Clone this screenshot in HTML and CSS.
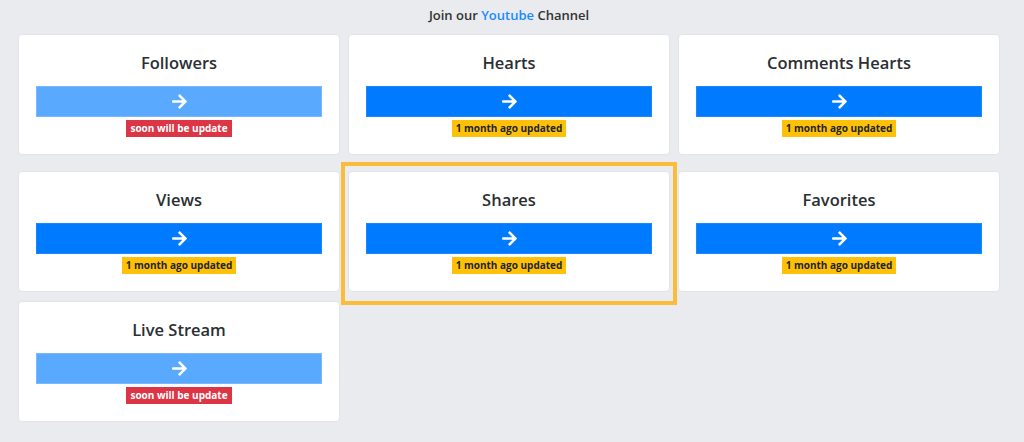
FILE: index.html
```html
<!DOCTYPE html>
<html>
<head>
<meta charset="utf-8">
<link rel="stylesheet" href="styles.css">
</head>
<body>
<div class="page">
  <p class="intro">Join our <a class="yt" href="#">Youtube</a> Channel</p>
  <div class="grid">
    <div class="card first">
      <h3 class="title">Followers</h3>
      <a class="btn off" href="#"><svg class="arrow" viewBox="0 0 448 512"><path d="M190.5 66.9l22.2-22.2c9.4-9.4 24.6-9.4 33.9 0L441 239c9.4 9.4 9.4 24.6 0 33.9L246.6 467.3c-9.4 9.4-24.6 9.4-33.9 0l-22.2-22.2c-9.5-9.5-9.3-25 .4-34.3L311.4 296H24c-13.3 0-24-10.7-24-24v-32c0-13.3 10.7-24 24-24h287.4L190.9 101.2c-9.8-9.3-10-24.8-.4-34.3z"/></svg></a>
      <span class="badge red">soon will be update</span>
    </div>
    <div class="card first">
      <h3 class="title">Hearts</h3>
      <a class="btn" href="#"><svg class="arrow" viewBox="0 0 448 512"><path d="M190.5 66.9l22.2-22.2c9.4-9.4 24.6-9.4 33.9 0L441 239c9.4 9.4 9.4 24.6 0 33.9L246.6 467.3c-9.4 9.4-24.6 9.4-33.9 0l-22.2-22.2c-9.5-9.5-9.3-25 .4-34.3L311.4 296H24c-13.3 0-24-10.7-24-24v-32c0-13.3 10.7-24 24-24h287.4L190.9 101.2c-9.8-9.3-10-24.8-.4-34.3z"/></svg></a>
      <span class="badge yellow">1 month ago updated</span>
    </div>
    <div class="card first">
      <h3 class="title">Comments Hearts</h3>
      <a class="btn" href="#"><svg class="arrow" viewBox="0 0 448 512"><path d="M190.5 66.9l22.2-22.2c9.4-9.4 24.6-9.4 33.9 0L441 239c9.4 9.4 9.4 24.6 0 33.9L246.6 467.3c-9.4 9.4-24.6 9.4-33.9 0l-22.2-22.2c-9.5-9.5-9.3-25 .4-34.3L311.4 296H24c-13.3 0-24-10.7-24-24v-32c0-13.3 10.7-24 24-24h287.4L190.9 101.2c-9.8-9.3-10-24.8-.4-34.3z"/></svg></a>
      <span class="badge yellow">1 month ago updated</span>
    </div>
    <div class="card">
      <h3 class="title">Views</h3>
      <a class="btn" href="#"><svg class="arrow" viewBox="0 0 448 512"><path d="M190.5 66.9l22.2-22.2c9.4-9.4 24.6-9.4 33.9 0L441 239c9.4 9.4 9.4 24.6 0 33.9L246.6 467.3c-9.4 9.4-24.6 9.4-33.9 0l-22.2-22.2c-9.5-9.5-9.3-25 .4-34.3L311.4 296H24c-13.3 0-24-10.7-24-24v-32c0-13.3 10.7-24 24-24h287.4L190.9 101.2c-9.8-9.3-10-24.8-.4-34.3z"/></svg></a>
      <span class="badge yellow">1 month ago updated</span>
    </div>
    <div class="card marked">
      <h3 class="title">Shares</h3>
      <a class="btn" href="#"><svg class="arrow" viewBox="0 0 448 512"><path d="M190.5 66.9l22.2-22.2c9.4-9.4 24.6-9.4 33.9 0L441 239c9.4 9.4 9.4 24.6 0 33.9L246.6 467.3c-9.4 9.4-24.6 9.4-33.9 0l-22.2-22.2c-9.5-9.5-9.3-25 .4-34.3L311.4 296H24c-13.3 0-24-10.7-24-24v-32c0-13.3 10.7-24 24-24h287.4L190.9 101.2c-9.8-9.3-10-24.8-.4-34.3z"/></svg></a>
      <span class="badge yellow">1 month ago updated</span>
    </div>
    <div class="card">
      <h3 class="title">Favorites</h3>
      <a class="btn" href="#"><svg class="arrow" viewBox="0 0 448 512"><path d="M190.5 66.9l22.2-22.2c9.4-9.4 24.6-9.4 33.9 0L441 239c9.4 9.4 9.4 24.6 0 33.9L246.6 467.3c-9.4 9.4-24.6 9.4-33.9 0l-22.2-22.2c-9.5-9.5-9.3-25 .4-34.3L311.4 296H24c-13.3 0-24-10.7-24-24v-32c0-13.3 10.7-24 24-24h287.4L190.9 101.2c-9.8-9.3-10-24.8-.4-34.3z"/></svg></a>
      <span class="badge yellow">1 month ago updated</span>
    </div>
    <div class="card">
      <h3 class="title">Live Stream</h3>
      <a class="btn off" href="#"><svg class="arrow" viewBox="0 0 448 512"><path d="M190.5 66.9l22.2-22.2c9.4-9.4 24.6-9.4 33.9 0L441 239c9.4 9.4 9.4 24.6 0 33.9L246.6 467.3c-9.4 9.4-24.6 9.4-33.9 0l-22.2-22.2c-9.5-9.5-9.3-25 .4-34.3L311.4 296H24c-13.3 0-24-10.7-24-24v-32c0-13.3 10.7-24 24-24h287.4L190.9 101.2c-9.8-9.3-10-24.8-.4-34.3z"/></svg></a>
      <span class="badge red">soon will be update</span>
    </div>
  </div>
</div>
</body>
</html>
```

FILE: styles.css
```css
* { box-sizing: border-box; }
html, body { margin: 0; padding: 0; }
body {
  background: #e9ebee;
  font-family: "Open Sans", "Noto Sans", sans-serif;
  color: #212529;
}
.page {
  width: 982px;
  margin-left: 18px;
}
.intro {
  margin: 0;
  height: 34px;
  padding-top: 6px;
  text-align: center;
  font-size: 13px;
  line-height: 18px;
  font-weight: 600;
  color: #333;
}
.yt { color: #1a8cff; text-decoration: none; }
.grid {
  display: grid;
  grid-template-columns: repeat(3, 322px);
  column-gap: 8px;
  row-gap: 9px;
}
.card {
  position: relative;
  background: #fff;
  border: 1px solid #e2e4e8;
  border-radius: 4px;
  height: 121px;
  padding: 16px 17px 0;
  display: flex;
  flex-direction: column;
  align-items: center;
}
.card.first { margin-bottom: 7px; }
.card.marked::after {
  content: "";
  position: absolute;
  left: -8px;
  right: -8px;
  top: -10px;
  bottom: -14px;
  border: 4px solid #fbbb3b;
  pointer-events: none;
}
.title {
  margin: 0;
  height: 35px;
  font-size: 16.5px;
  line-height: 24px;
  font-weight: 600;
  color: #2b2f33;
}
.btn {
  align-self: stretch;
  height: 31px;
  background: #007bff;
  border: 1px solid #1a88ff;
  display: flex;
  align-items: center;
  justify-content: center;
}
.btn.off { background: #59a9ff; border-color: #7ab9ff; }
.arrow { width: 15px; height: 17px; fill: #fff; }
.badge {
  margin-top: 3px;
  height: 17px;
  padding: 0 4px;
  font-size: 10px;
  line-height: 17px;
  font-weight: 700;
}
.badge.red { background: #dc3545; color: #fff; }
.badge.yellow { background: #ffc107; color: #212529; }
```
